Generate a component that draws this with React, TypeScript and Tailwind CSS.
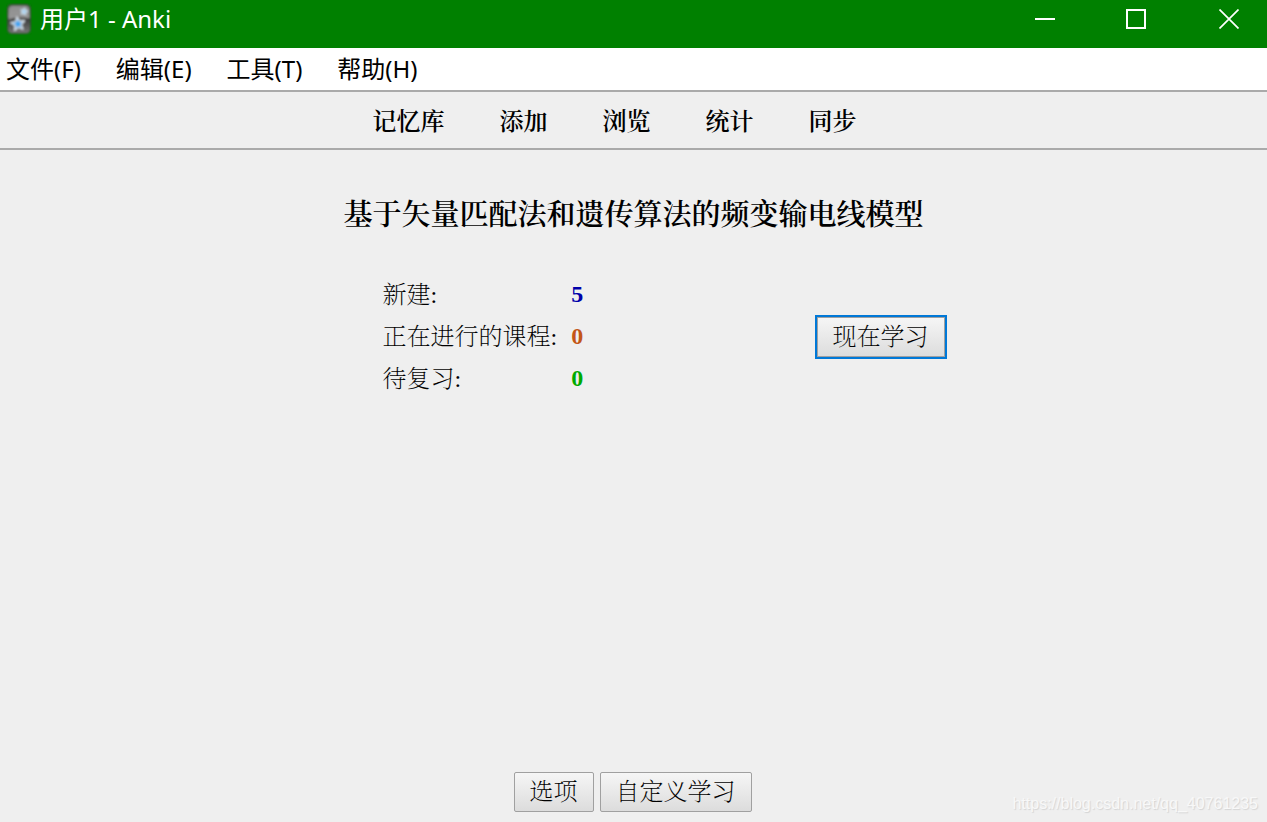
const menus = ['文件(F)', '编辑(E)', '工具(T)', '帮助(H)'];
const links = ['记忆库', '添加', '浏览', '统计', '同步'];
const counts = [
  { label: '新建:', value: 5, color: 'text-[#0000aa]' },
  { label: '正在进行的课程:', value: 0, color: 'text-[#c35617]' },
  { label: '待复习:', value: 0, color: 'text-[#00aa00]' },
];

const star = 'M0-7L1.9-2.6L6.7-2.2L3 1L4.1 5.7L0 3.2L-4.1 5.7L-3 1L-6.7-2.2L-1.9-2.6Z';

function AnkiLogo() {
  return (
    <svg width="26" height="32" viewBox="0 0 26 32" aria-hidden="true">
      <defs>
        <linearGradient id="card" x1="0" y1="0" x2="0" y2="1">
          <stop offset="0" stopColor="#5c5c5c" />
          <stop offset="0.45" stopColor="#7a7a7a" />
          <stop offset="0.5" stopColor="#3c3c3c" />
          <stop offset="1" stopColor="#777777" />
        </linearGradient>
        <filter id="soft" x="-10%" y="-10%" width="120%" height="120%">
          <feGaussianBlur stdDeviation="0.8" />
        </filter>
      </defs>
      <g filter="url(#soft)">
        <rect x="1" y="1" width="24" height="30" rx="5" fill="#2c4a2c" />
        <rect x="2" y="2" width="22" height="28" rx="4" fill="url(#card)" />
        <path d="M3 17V7a4 4 0 0 1 4-4h12a4 4 0 0 1 4 4v8Q12 11 3 17Z" fill="#a0a0a0" opacity="0.75" />
        <path d={star} transform="translate(12 21) rotate(-8)" fill="#3fa2ee" stroke="#d0dae2" strokeWidth="1.6" strokeLinejoin="round" />
        <path d={star} transform="translate(18 8.500) rotate(12) scale(.5)" fill="#8cc8f3" stroke="#c9dfee" strokeWidth="2.4" strokeLinejoin="round" />
      </g>
    </svg>
  );
}

const pushButton =
  "rounded-xs border border-[#a0a0a0] bg-linear-to-b from-[#f6f6f6] to-[#dcdcdc] h-10 px-[15px] text-2xl leading-9 font-extralight";

export default function App() {
  return (
    <div className="flex min-h-screen flex-col bg-[#efefef] font-['Liberation_Serif','Noto_Serif_CJK_SC','Noto_Sans_CJK_SC',serif] text-black">
      <header className="flex h-12 items-start justify-between bg-[#008000] font-['Noto_Sans','Noto_Sans_CJK_SC',sans-serif] text-white">
        <div className="flex h-[38px] items-center gap-2 pl-1.5">
          <AnkiLogo />
          <h1 className="text-2xl leading-9">用户1 - Anki</h1>
        </div>
        <div className="flex">
          <button aria-label="最小化" className="flex h-[38px] w-[91px] items-center justify-center">
            <svg width="20" height="20" viewBox="0 0 20 20"><path d="M0 10H20" stroke="white" strokeWidth="2" /></svg>
          </button>
          <button aria-label="最大化" className="flex h-[38px] w-[91px] items-center justify-center">
            <svg width="20" height="20" viewBox="0 0 20 20"><path d="M1 1H19V19H1Z" fill="none" stroke="white" strokeWidth="2" /></svg>
          </button>
          <button aria-label="关闭" className="flex h-[38px] w-[86px] items-center justify-center pl-2.5">
            <svg width="20" height="20" viewBox="0 0 20 20"><path d="M.5 .5L19.5 19.5M19.5 .5L.5 19.5" stroke="white" strokeWidth="1.7" /></svg>
          </button>
        </div>
      </header>

      <nav aria-label="菜单" className="flex h-11 items-center gap-[35px] border-b-2 border-[#aaaaaa] bg-white pl-1.5 font-['Noto_Sans','Noto_Sans_CJK_SC',sans-serif]">
        {menus.map((m) => (
          <button key={m} className="text-2xl leading-9">{m}</button>
        ))}
      </nav>

      <nav aria-label="工具栏" className="flex h-[58px] items-center justify-center gap-[55px] border-b-2 border-[#aaaaaa] pt-1 pr-[38px]">
        {links.map((l) => (
          <a key={l} href="#" className="text-2xl leading-9 font-semibold">{l}</a>
        ))}
      </nav>

      <main className="flex flex-1 flex-col items-center pt-[45px]">
        <h2 className="text-[29px] leading-10 font-semibold">基于矢量匹配法和遗传算法的频变输电线模型</h2>
        <div className="mt-[39px] flex w-full max-w-[628px] items-center justify-between pr-px pl-[63px]">
          <table className="text-2xl">
            <tbody>
              {counts.map((c) => (
                <tr key={c.label} className="h-[42px]">
                  <th scope="row" className="pr-3.5 text-left font-extralight">{c.label}</th>
                  <td className={`pb-0.5 font-bold ${c.color}`}>{c.value}</td>
                </tr>
              ))}
            </tbody>
          </table>
          <button className="h-11 border-2 border-[#0078d7] bg-linear-to-b from-[#f6f6f6] to-[#dcdcdc] px-4 text-2xl leading-9 font-extralight inset-ring inset-ring-[#a0a0a0]">
            现在学习
          </button>
        </div>
      </main>

      <footer className="relative flex justify-center gap-1.5 pr-0.5 pb-2.5">
        <button className={pushButton}>选项</button>
        <button className={pushButton}>自定义学习</button>
        <span className="absolute right-[9px] bottom-2 font-['Liberation_Sans',sans-serif] text-base leading-5 text-[#f8f8f8] [text-shadow:1px_1px_1px_#d4d4d4]">
          https://blog.csdn.net/qq_40761235
        </span>
      </footer>
    </div>
  );
}
